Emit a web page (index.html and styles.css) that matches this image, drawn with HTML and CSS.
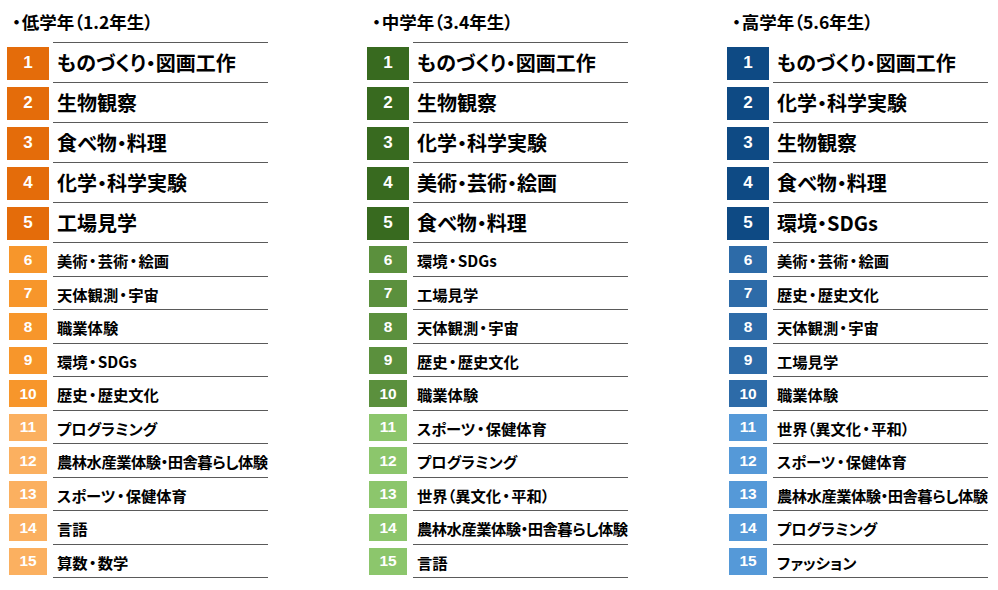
FILE: index.html
```html
<!DOCTYPE html>
<html lang="ja">
<head>
<meta charset="utf-8">
<title>学年別ランキング</title>
<link rel="stylesheet" href="styles.css">
</head>
<body>
<div class="board">
  <section class="col col--orange">
    <h2 class="heading"><span class="dot">・</span>低学年（1.2年生）</h2>
    <ol class="list list--ruled">
      <li class="row row--lg"><span class="badge">1</span><span class="label">ものづくり<span class="sep">・</span>図画工作</span></li>
      <li class="row row--lg"><span class="badge">2</span><span class="label">生物観察</span></li>
      <li class="row row--lg"><span class="badge">3</span><span class="label">食べ物<span class="sep">・</span>料理</span></li>
      <li class="row row--lg"><span class="badge">4</span><span class="label">化学<span class="sep">・</span>科学実験</span></li>
      <li class="row row--lg"><span class="badge">5</span><span class="label">工場見学</span></li>
      <li class="row row--md"><span class="badge">6</span><span class="label">美術<span class="sep">・</span>芸術<span class="sep">・</span>絵画</span></li>
      <li class="row row--md"><span class="badge">7</span><span class="label">天体観測<span class="sep">・</span>宇宙</span></li>
      <li class="row row--md"><span class="badge">8</span><span class="label">職業体験</span></li>
      <li class="row row--md"><span class="badge">9</span><span class="label">環境<span class="sep">・</span>SDGs</span></li>
      <li class="row row--md"><span class="badge">10</span><span class="label">歴史<span class="sep">・</span>歴史文化</span></li>
      <li class="row row--sm"><span class="badge">11</span><span class="label">プログラミング</span></li>
      <li class="row row--sm"><span class="badge">12</span><span class="label label--long">農林水産業体験<span class="sep">・</span>田舎暮らし体験</span></li>
      <li class="row row--sm"><span class="badge">13</span><span class="label">スポーツ<span class="sep">・</span>保健体育</span></li>
      <li class="row row--sm"><span class="badge">14</span><span class="label">言語</span></li>
      <li class="row row--sm"><span class="badge">15</span><span class="label">算数<span class="sep">・</span>数学</span></li>
    </ol>
  </section>
  <section class="col col--green">
    <h2 class="heading"><span class="dot">・</span>中学年（3.4年生）</h2>
    <ol class="list list--ruled">
      <li class="row row--lg"><span class="badge">1</span><span class="label">ものづくり<span class="sep">・</span>図画工作</span></li>
      <li class="row row--lg"><span class="badge">2</span><span class="label">生物観察</span></li>
      <li class="row row--lg"><span class="badge">3</span><span class="label">化学<span class="sep">・</span>科学実験</span></li>
      <li class="row row--lg"><span class="badge">4</span><span class="label">美術<span class="sep">・</span>芸術<span class="sep">・</span>絵画</span></li>
      <li class="row row--lg"><span class="badge">5</span><span class="label">食べ物<span class="sep">・</span>料理</span></li>
      <li class="row row--md"><span class="badge">6</span><span class="label">環境<span class="sep">・</span>SDGs</span></li>
      <li class="row row--md"><span class="badge">7</span><span class="label">工場見学</span></li>
      <li class="row row--md"><span class="badge">8</span><span class="label">天体観測<span class="sep">・</span>宇宙</span></li>
      <li class="row row--md"><span class="badge">9</span><span class="label">歴史<span class="sep">・</span>歴史文化</span></li>
      <li class="row row--md"><span class="badge">10</span><span class="label">職業体験</span></li>
      <li class="row row--sm"><span class="badge">11</span><span class="label">スポーツ<span class="sep">・</span>保健体育</span></li>
      <li class="row row--sm"><span class="badge">12</span><span class="label">プログラミング</span></li>
      <li class="row row--sm"><span class="badge">13</span><span class="label">世界（異文化<span class="sep">・</span>平和）</span></li>
      <li class="row row--sm"><span class="badge">14</span><span class="label label--long">農林水産業体験<span class="sep">・</span>田舎暮らし体験</span></li>
      <li class="row row--sm"><span class="badge">15</span><span class="label">言語</span></li>
    </ol>
  </section>
  <section class="col col--blue">
    <h2 class="heading"><span class="dot">・</span>高学年（5.6年生）</h2>
    <ol class="list">
      <li class="row row--lg"><span class="badge">1</span><span class="label">ものづくり<span class="sep">・</span>図画工作</span></li>
      <li class="row row--lg"><span class="badge">2</span><span class="label">化学<span class="sep">・</span>科学実験</span></li>
      <li class="row row--lg"><span class="badge">3</span><span class="label">生物観察</span></li>
      <li class="row row--lg"><span class="badge">4</span><span class="label">食べ物<span class="sep">・</span>料理</span></li>
      <li class="row row--lg"><span class="badge">5</span><span class="label">環境<span class="sep">・</span>SDGs</span></li>
      <li class="row row--md"><span class="badge">6</span><span class="label">美術<span class="sep">・</span>芸術<span class="sep">・</span>絵画</span></li>
      <li class="row row--md"><span class="badge">7</span><span class="label">歴史<span class="sep">・</span>歴史文化</span></li>
      <li class="row row--md"><span class="badge">8</span><span class="label">天体観測<span class="sep">・</span>宇宙</span></li>
      <li class="row row--md"><span class="badge">9</span><span class="label">工場見学</span></li>
      <li class="row row--md"><span class="badge">10</span><span class="label">職業体験</span></li>
      <li class="row row--sm"><span class="badge">11</span><span class="label">世界（異文化<span class="sep">・</span>平和）</span></li>
      <li class="row row--sm"><span class="badge">12</span><span class="label">スポーツ<span class="sep">・</span>保健体育</span></li>
      <li class="row row--sm"><span class="badge">13</span><span class="label label--long">農林水産業体験<span class="sep">・</span>田舎暮らし体験</span></li>
      <li class="row row--sm"><span class="badge">14</span><span class="label">プログラミング</span></li>
      <li class="row row--sm"><span class="badge">15</span><span class="label">ファッション</span></li>
    </ol>
  </section>
</div>
</body>
</html>
```

FILE: styles.css
```css
html, body {
  margin: 0;
  padding: 0;
  background: #ffffff;
}

body {
  width: 998px;
  height: 590px;
  overflow: hidden;
  font-family: "Noto Sans CJK JP", "Noto Sans", sans-serif;
  color: #000000;
}

.board {
  display: grid;
  grid-template-columns: 360px 360px 1fr;
}

.heading {
  margin: 0;
  height: 42px;
  box-sizing: border-box;
  padding: 1px 0 0 12px;
  display: flex;
  align-items: center;
  font-size: 17.5px;
  font-weight: 700;
  letter-spacing: 0;
  font-feature-settings: "palt";
  white-space: nowrap;
}

.dot {
  margin-right: 1px;
}

.list {
  list-style: none;
  margin: 0;
  padding: 0;
}

.list::before {
  content: "";
  display: block;
  margin-left: 53px;
  width: 215px;
  border-top: 1px solid transparent;
}

.list--ruled::before {
  border-top-color: #5a5a5a;
}

.row {
  display: flex;
  align-items: center;
}

.row--lg { height: 40px; }
.row--md,
.row--sm { height: 33.5px; }

.badge {
  flex: none;
  display: flex;
  align-items: center;
  justify-content: center;
  color: #ffffff;
  font-family: "Liberation Sans", Arial, sans-serif;
  font-weight: 700;
}

.row--lg .badge {
  width: 42px;
  height: 33px;
  margin-left: 7px;
  font-size: 17px;
}

.row--md .badge,
.row--sm .badge {
  width: 38px;
  height: 27px;
  margin: 0 2px 0 9px;
  font-size: 15.5px;
}

.label {
  align-self: stretch;
  box-sizing: border-box;
  width: 215px;
  margin-left: 4px;
  padding: 2px 0 0 4px;
  display: flex;
  align-items: center;
  border-bottom: 1px solid #5a5a5a;
  font-weight: 700;
  white-space: nowrap;
  font-feature-settings: "palt";
}

.sep {
  margin: 0 0.08em;
}

.row--lg .label {
  font-size: 20px;
  padding-top: 0;
}
.row--lg .sep {
  margin: 0;
}

.row--md .label,
.row--sm .label { font-size: 15.3px; }

.label--long {
  letter-spacing: -0.5px;
}
.label--long .sep {
  margin: 0;
}

.col--orange .row--lg .badge { background: #e46c0a; }
.col--orange .row--md .badge { background: #f7962b; }
.col--orange .row--sm .badge { background: #fbb060; }

.col--green .row--lg .badge { background: #386a1f; }
.col--green .row--md .badge { background: #5b903d; }
.col--green .row--sm .badge { background: #8cc66c; }

.col--blue .row--lg .badge { background: #0e4a84; }
.col--blue .row--md .badge { background: #2d6ba8; }
.col--blue .row--sm .badge { background: #5599d8; }
```
